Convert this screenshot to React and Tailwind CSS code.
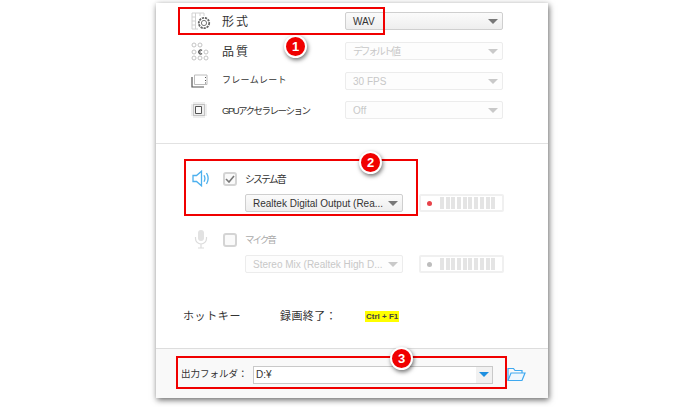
const font = { fontFamily: '"Liberation Sans", "Noto Sans CJK JP", sans-serif' };

function Arrow({ color = 'border-t-[#777]' }) {
  return <span className={`w-0 h-0 border-x-[5px] border-x-transparent border-t-[5px] ${color}`} />;
}

function Select({ text, disabled, textClass = '' }) {
  return (
    <div
      className={`w-[158px] h-[18px] flex items-center justify-between pl-[7px] pr-[4px] rounded-[2px] border text-[10px] ${
        disabled
          ? 'border-[#ececec] bg-[#fdfdfd] text-[#c8c8c8]'
          : 'border-[#cfcfcf] bg-gradient-to-b from-[#fbfbfb] to-[#eeeeee] text-[#333]'
      }`}
    >
      <span className={`whitespace-nowrap ${textClass}`}>{text}</span>
      <Arrow color={disabled ? 'border-t-[#c9c9c9]' : 'border-t-[#777]'} />
    </div>
  );
}

function Meter({ dot }) {
  return (
    <div className="w-[85px] h-[18px] flex items-center pl-[6px] border-2 border-[#f0f0f0] rounded-[2px]">
      <span className={`w-[5px] h-[5px] rounded-full ${dot}`} />
      <div className="flex gap-[1.7px] ml-[8px]">
        {Array.from({ length: 10 }).map((_, i) => (
          <span key={i} className="w-[4px] h-[12px] bg-[#e4e4e4]" />
        ))}
      </div>
    </div>
  );
}

function FormatIcon() {
  return (
    <svg width="20" height="18" viewBox="0 0 20 18" fill="none">
      <path d="M1 1h12M1 1v16h6M4.500 1v16M1 5h3.500M1 9h3.500M1 13h3.500M9 1v3M13 1v3" stroke="#d2d2d2" strokeWidth="1" />
      <circle cx="13" cy="11" r="5.200" stroke="#666" strokeWidth="1.800" strokeDasharray="2.200 0.900" />
      <circle cx="13" cy="11" r="2.600" stroke="#777" strokeWidth="1" />
    </svg>
  );
}

function QualityIcon() {
  const dots = [
    [3, 3], [9, 3],
    [3, 10], [15, 10],
    [3, 16], [9, 16], [15, 16],
  ];
  return (
    <svg width="18" height="19" viewBox="0 0 18 19" fill="none">
      {dots.map(([x, y]) => (
        <circle key={`${x}-${y}`} cx={x} cy={y} r="2" stroke="#c4c4c4" strokeWidth="1" />
      ))}
      <path d="M11 8.500a2 2 0 1 0 0 3" stroke="#555" strokeWidth="1.300" />
      <circle cx="9" cy="10" r="0.800" fill="#555" />
    </svg>
  );
}

function FrameIcon() {
  return (
    <svg width="17" height="14" viewBox="0 0 17 14" fill="none">
      <path d="M3.500 1h12.500v9.500H3.500z" stroke="#bcbcbc" strokeWidth="1" />
      <path d="M1 3v10h12" stroke="#555" strokeWidth="1.200" />
      <path d="M14.500 3v1M14.500 6v1M14.500 8.500v1" stroke="#555" strokeWidth="1" />
    </svg>
  );
}

function ChipIcon() {
  return (
    <svg width="16" height="16" viewBox="0 0 16 16" fill="none">
      <path d="M3 0v16M5 0v16M7 0v16M9 0v16M11 0v16M13 0v16M0 3h16M0 5h16M0 7h16M0 9h16M0 11h16M0 13h16" stroke="#d6d6d6" strokeWidth="0.800" />
      <rect x="2.500" y="2.500" width="11" height="11" fill="#efefef" stroke="#c4c4c4" />
      <path d="M4.500 4.500h6v7h-6z" fill="#fafafa" stroke="#555" strokeWidth="1" />
    </svg>
  );
}

function SpeakerIcon() {
  return (
    <svg width="18" height="17" viewBox="0 0 18 17" fill="none" stroke="#4cb0ee" strokeWidth="1.300">
      <path d="M1 5.500h3.500L9.500 1.200v14.600L4.500 11.500H1z" />
      <path d="M12 5.200c1 1.800 1 4.800 0 6.600M14.500 3c1.900 3.200 1.900 7.800 0 11" />
    </svg>
  );
}

function MicIcon() {
  return (
    <svg width="14" height="20" viewBox="0 0 14 20" fill="none">
      <rect x="4" y="1" width="6" height="11" rx="3" fill="#e2e2e2" />
      <path d="M1.500 8v1.500a5.500 5.500 0 0 0 11 0V8M7 15v4M4 19h6" stroke="#dcdcdc" strokeWidth="1.200" />
    </svg>
  );
}

function FolderIcon() {
  return (
    <svg width="19" height="15" viewBox="0 0 19 15" fill="none" stroke="#3fa9f0" strokeWidth="1.200">
      <path d="M1 13V1.500h5.500L8 3.500h7v2.500" />
      <path d="M1 13.500L4 6h14l-3 7.500z" fill="#eef7fe" />
    </svg>
  );
}

function Checkbox({ checked }) {
  return (
    <div className="w-[14px] h-[14px] flex items-center justify-center rounded-[3px] border-2 border-[#d4d4d4] bg-[#fafafa]">
      {checked && (
        <svg width="10" height="8" viewBox="0 0 10 8" fill="none">
          <path d="M1 4l3 3 5-6" stroke="#777" strokeWidth="1.600" />
        </svg>
      )}
    </div>
  );
}

function Badge({ n, className }) {
  return (
    <div className={`absolute w-[23px] h-[23px] rounded-full bg-[#f00000] border-2 border-white shadow-[1px_2px_4px_rgba(0,0,0,0.55)] flex items-center justify-center text-white text-[13px] font-bold leading-none ${className}`}>
      {n}
    </div>
  );
}

function Row({ icon, label, labelClass, children }) {
  return (
    <div className="h-[30px] flex items-center">
      <div className="w-[36px] pl-[5px] flex">{icon}</div>
      <div className={`w-[123px] whitespace-nowrap text-[#333] ${labelClass}`}>{label}</div>
      {children}
    </div>
  );
}

export default function App() {
  return (
    <div className="w-[700px] h-[407px] bg-white overflow-hidden pl-[156px] pt-[3px]" style={font}>
      <div className="relative w-[392px] h-[395px] bg-white flex flex-col shadow-[1px_2px_6px_rgba(0,0,0,0.6)]">
        <div className="h-[141px] border-b border-[#e2e2e2] pt-[3px] pl-[30px]">
          <Row icon={<FormatIcon />} label="形式" labelClass="text-[12px] tracking-[2px] pt-[2px]">
            <Select text="WAV" />
          </Row>
          <Row icon={<QualityIcon />} label="品質" labelClass="text-[12px] tracking-[2px] pt-[2px]">
            <Select text="デフォルト値" textClass="text-[10px] tracking-[-2.400px]" disabled />
          </Row>
          <Row icon={<FrameIcon />} label="フレームレート" labelClass="text-[9px] tracking-[0.300px]">
            <Select text="30 FPS" disabled />
          </Row>
          <div className="-mt-px">
            <Row icon={<ChipIcon />} label="GPUアクセラレーション" labelClass="text-[9.500px] tracking-[-1.500px] pt-[2px]">
              <Select text="Off" disabled />
            </Row>
          </div>
        </div>

        <div className="h-[204px] flex flex-col pl-[36px]">
          <div className="flex items-center h-[16px] mt-[26px]">
            <div className="w-[31px]"><SpeakerIcon /></div>
            <div className="pt-[2px]"><Checkbox checked /></div>
            <span className="ml-[8px] pt-[3px] text-[10px] tracking-[-2px] text-[#333]">システム音</span>
          </div>
          <div className="flex gap-[16px] ml-[53px] mt-[8px]">
            <Select text="Realtek Digital Output (Rea..." />
            <Meter dot="bg-[#e8434a]" />
          </div>
          <div className="flex items-center h-[16px] mt-[19px]">
            <div className="w-[31px] pl-[2px]"><MicIcon /></div>
            <div className="pt-[2px]"><Checkbox /></div>
            <span className="ml-[8px] pt-[3px] text-[9.500px] tracking-[-2px] text-[#aaa]">マイク音</span>
          </div>
          <div className="flex gap-[16px] ml-[53px] mt-[8px]">
            <Select text="Stereo Mix (Realtek High D..." disabled />
            <Meter dot="bg-[#bdbdbd]" />
          </div>
          <div className="flex items-center mt-[35px] -ml-[9px] h-[16px]">
            <span className="w-[97px] text-[11px] tracking-[0.600px] text-[#333]">ホットキー</span>
            <span className="w-[85px] text-[11px] tracking-[0.400px] text-[#333]">録画終了：</span>
            <span className="h-[11px] px-[1px] bg-[#ffff00] text-[8px] font-bold leading-[11px] text-[#444]">Ctrl + F1</span>
          </div>
        </div>

        <div className="flex-1 bg-[#f9f9f9] border-t border-[#dddddd] flex items-center pl-[25px] pt-[2px]">
          <span className="w-[72px] text-[9.500px] text-[#333] whitespace-nowrap">出力フォルダ：</span>
          <div className="w-[240px] h-[18px] flex items-center justify-between bg-white border border-[#c9c9c9] pl-[2px] text-[10px] text-[#333]">
            <span>D:¥</span>
            <div className="w-[16px] h-full bg-[#f1f1f1] flex items-center justify-center">
              <span className="w-0 h-0 border-x-[5px] border-x-transparent border-t-[5px] border-t-[#1d8fe0]" />
            </div>
          </div>
          <div className="ml-[14px]"><FolderIcon /></div>
        </div>

        <div className="absolute left-[22px] top-[4px] w-[207px] h-[28px] border-[2px] border-[#f00000]" />
        <div className="absolute left-[28px] top-[156px] w-[234px] h-[57px] border-[2px] border-[#f00000]" />
        <div className="absolute left-[20px] top-[353px] w-[331px] h-[33px] border-[2px] border-[#f00000]" />
        <Badge n="1" className="left-[128px] top-[32px]" />
        <Badge n="2" className="left-[203px] top-[148px]" />
        <Badge n="3" className="left-[234px] top-[344px]" />
      </div>
    </div>
  );
}
